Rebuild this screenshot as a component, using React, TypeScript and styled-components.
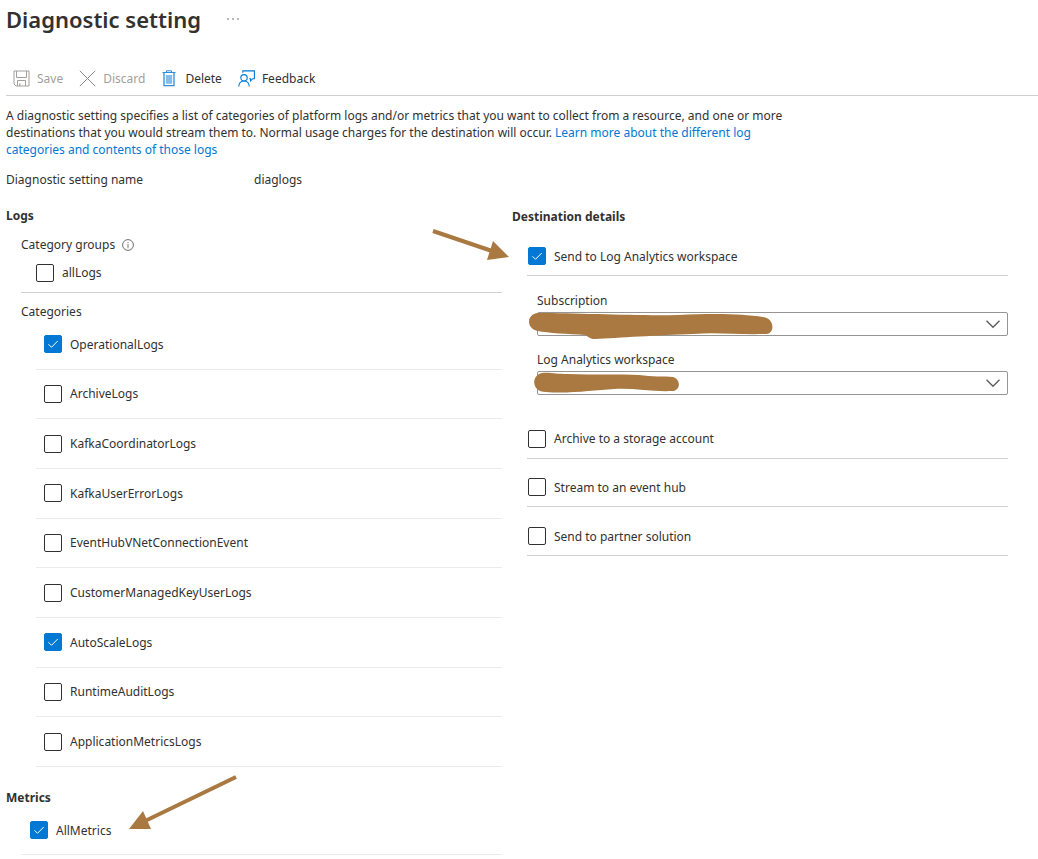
import React, { useId, useState } from "react";
import styled, { createGlobalStyle } from "styled-components";

const GlobalStyle = createGlobalStyle`
  *, *::before, *::after { box-sizing: border-box; }
  body {
    margin: 0;
    background: #fff;
    color: #323130;
    font: 12px/17px "Noto Sans", "Open Sans", sans-serif;
  }
  h1, h2, h3, p, ul { margin: 0; padding: 0; }
  button, select, input { font: inherit; color: inherit; }
`;

const Page = styled.main`
  padding: 3px 0 4px 6px;
`;

const Header = styled.header`
  display: flex;
  align-items: center;
  gap: 24px;
`;

const Title = styled.h1`
  font-size: 22px;
  line-height: 32px;
  font-weight: 600;
`;

const MoreButton = styled.button`
  display: flex;
  padding: 0;
  border: 0;
  background: none;
`;

const Toolbar = styled.div`
  display: flex;
  align-items: center;
  gap: 16px;
  height: 36px;
  margin-top: 25px;
  padding: 2px 7px 0;
  border-bottom: 1px solid #d2d0ce;
`;

const ToolButton = styled.button`
  display: flex;
  align-items: center;
  gap: 7px;
  padding: 0;
  border: 0;
  background: none;
  &:disabled { color: #a19f9d; }
`;

const Description = styled.p`
  max-width: 800px;
  margin-top: 11px;
`;

const Link = styled.a`
  color: #0078d4;
  text-decoration: none;
`;

const NameRow = styled.div`
  display: grid;
  grid-template-columns: 248px 1fr;
  margin-top: 13px;
`;

const Columns = styled.div<{ $top: number }>`
  display: grid;
  grid-template-columns: 1fr 1fr;
  gap: 10px;
  margin: ${(p) => p.$top}px 30px 0 0;
`;

const Column = styled.section<{ $inset?: number }>`
  min-width: 0;
  padding-top: ${(p) => p.$inset ?? 0}px;
`;

const SectionTitle = styled.h2`
  font-size: 12px;
  line-height: 17px;
  font-weight: 700;
`;

const Group = styled.div<{ $top: number }>`
  margin: ${(p) => p.$top}px 0 0 15px;
`;

const GroupTitle = styled.h3`
  display: flex;
  align-items: center;
  gap: 7px;
  font-size: 12px;
  line-height: 17px;
  font-weight: 400;
`;

const CheckRow = styled.div<{ $height: number; $indent: number; $line: string }>`
  display: flex;
  align-items: center;
  position: relative;
  height: ${(p) => p.$height}px;
  padding-left: ${(p) => p.$indent}px;
  border-bottom: 1px solid ${(p) => p.$line};
`;

const CategoryList = styled.ul`
  display: grid;
  grid-auto-rows: 1fr;
  min-height: 447px;
  margin-left: 15px;
  list-style: none;
`;

const CategoryItem = styled.li`
  display: flex;
  align-items: center;
  padding-left: 8px;
  border-bottom: 1px solid #edebe9;
`;

const DestinationList = styled.ul`
  display: grid;
  grid-auto-rows: 1fr;
  min-height: 146px;
  list-style: none;
`;

const DestinationItem = styled.li`
  display: flex;
  align-items: flex-end;
  padding: 0 0 10px 1px;
  border-bottom: 1px solid #d2d0ce;
`;

const CheckLabel = styled.label`
  display: flex;
  align-items: center;
  gap: 8px;
`;

const BoxWrap = styled.span`
  display: grid;
  width: 18px;
  height: 18px;
  > * { grid-area: 1 / 1; }
  > svg { pointer-events: none; }
`;

const Box = styled.input`
  appearance: none;
  width: 18px;
  height: 18px;
  margin: 0;
  border: 1px solid #323130;
  border-radius: 2px;
  background: #fff;
  &:checked { background: #0078d4; border-color: #0078d4; }
`;

const Fields = styled.div`
  display: grid;
  gap: 15px;
  margin: 16px 0 15px 10px;
`;

const Field = styled.div`
  position: relative;
`;

const FieldLabel = styled.label`
  display: block;
  margin-bottom: 3px;
`;

const SelectWrap = styled.div`
  display: grid;
  align-items: center;
  > * { grid-area: 1 / 1; }
  > svg { justify-self: end; margin-right: 7px; pointer-events: none; }
`;

const Select = styled.select`
  appearance: none;
  width: 100%;
  height: 24px;
  padding: 0 28px 0 8px;
  border: 1px solid #979593;
  border-radius: 2px;
  background: #fff;
`;

const Annotation = styled.svg<{ $left: number; $top: number }>`
  position: absolute;
  left: ${(p) => p.$left}px;
  top: ${(p) => p.$top}px;
  pointer-events: none;
`;

const BROWN = "#a97941";

function Check({ label, checked = false }: { label: string; checked?: boolean }) {
  const [on, setOn] = useState(checked);
  const id = useId();
  return (
    <CheckLabel htmlFor={id}>
      <BoxWrap>
        <Box id={id} type="checkbox" checked={on} onChange={(e) => setOn(e.target.checked)} />
        {on && (
          <svg width="18" height="18" viewBox="0 0 18 18" fill="none" stroke="#fff" aria-hidden="true">
            <path d="M4.500 9.300l3 3 6.200-6.300" />
          </svg>
        )}
      </BoxWrap>
      {label}
    </CheckLabel>
  );
}

function Dropdown({ label, children }: { label: string; children: React.ReactNode }) {
  const id = useId();
  return (
    <Field>
      <FieldLabel htmlFor={id}>{label}</FieldLabel>
      <SelectWrap>
        <Select id={id} />
        <svg width="16" height="10" viewBox="0 0 16 10" fill="none" stroke="#605e5c" strokeWidth="1.4" aria-hidden="true">
          <path d="M1.500 1.700L8 8.200l6.500-6.500" />
        </svg>
      </SelectWrap>
      {children}
    </Field>
  );
}

const SaveIcon = () => (
  <svg width="17" height="17" viewBox="0 0 17 17" fill="none" stroke="#a19f9d" aria-hidden="true">
    <path d="M1 1h15v15H3L1 14zM3.500 1v6.500h10V1M4.500 16v-5.500h8V16M6.800 16v-2.800" />
  </svg>
);

const DiscardIcon = () => (
  <svg width="17" height="17" viewBox="0 0 17 17" fill="none" stroke="#8a8886" aria-hidden="true">
    <path d="M.8.8l15.400 15.400M16.200.8L.8 16.200" />
  </svg>
);

const DeleteIcon = () => (
  <svg width="17" height="17" viewBox="-1 0 17 17" fill="none" stroke="#2b8fe0" aria-hidden="true">
    <path d="M.5 2.500h13M4.500 2.300V.8h5v1.500" />
    <path d="M2 2.500v13.200h10V2.500" strokeWidth="1.300" />
    <path d="M3.800 5h6.400v8.800H3.800z" fill="#83bdec" stroke="none" />
  </svg>
);

const FeedbackIcon = () => (
  <svg width="17" height="17" viewBox="0 0 17 17" fill="none" stroke="#0078d4" strokeWidth="1.100" aria-hidden="true">
    <path d="M4.800 2.700V.9h11.600v7.800h-1.600l-2.300 2.200V8.700h-1.300" />
    <circle cx="6" cy="7.800" r="3.200" />
    <path d="M.7 16.500c.3-3.400 2.400-5.500 5.300-5.500s5 2.100 5.300 5.500" />
  </svg>
);

const InfoIcon = () => (
  <svg width="12" height="12" viewBox="0 0 12 12" fill="none" stroke="#605e5c" strokeWidth="0.900" aria-hidden="true">
    <circle cx="6" cy="6" r="5.400" />
    <path d="M6 5.200v3.600M6 3.200v1" />
  </svg>
);

const categories = [
  { name: "OperationalLogs", on: true },
  { name: "ArchiveLogs" },
  { name: "KafkaCoordinatorLogs" },
  { name: "KafkaUserErrorLogs" },
  { name: "EventHubVNetConnectionEvent" },
  { name: "CustomerManagedKeyUserLogs" },
  { name: "AutoScaleLogs", on: true },
  { name: "RuntimeAuditLogs" },
  { name: "ApplicationMetricsLogs" },
];

const destinations = ["Archive to a storage account", "Stream to an event hub", "Send to partner solution"];

export default function App() {
  return (
    <>
      <GlobalStyle />
      <Page>
        <Header>
          <Title>Diagnostic setting</Title>
          <MoreButton aria-label="More actions">
            <svg width="16" height="4" viewBox="0 0 16 4" fill="#605e5c" aria-hidden="true">
              <circle cx="3" cy="2" r=".8" />
              <circle cx="8" cy="2" r=".8" />
              <circle cx="13" cy="2" r=".8" />
            </svg>
          </MoreButton>
        </Header>
        <Toolbar role="toolbar">
          <ToolButton disabled><SaveIcon />Save</ToolButton>
          <ToolButton disabled><DiscardIcon />Discard</ToolButton>
          <ToolButton><DeleteIcon />Delete</ToolButton>
          <ToolButton><FeedbackIcon />Feedback</ToolButton>
        </Toolbar>
        <Description>
          A diagnostic setting specifies a list of categories of platform logs and/or metrics that you want to collect
          from a resource, and one or more destinations that you would stream them to. Normal usage charges for the
          destination will occur.{" "}
          <Link href="#learn-more">Learn more about the different log categories and contents of those logs</Link>
        </Description>
        <NameRow>
          <span>Diagnostic setting name</span>
          <span>diaglogs</span>
        </NameRow>
        <Columns $top={19}>
          <Column>
            <SectionTitle>Logs</SectionTitle>
            <Group $top={12}>
              <GroupTitle>Category groups <InfoIcon /></GroupTitle>
              <CheckRow $height={40} $indent={15} $line="#d2d0ce">
                <Check label="allLogs" />
              </CheckRow>
            </Group>
            <Group $top={10}>
              <GroupTitle>Categories</GroupTitle>
              <CategoryList>
                {categories.map((c) => (
                  <CategoryItem key={c.name}>
                    <Check label={c.name} checked={c.on} />
                  </CategoryItem>
                ))}
              </CategoryList>
            </Group>
          </Column>
          <Column $inset={1}>
            <SectionTitle>Destination details</SectionTitle>
            <Group $top={12}>
              <CheckRow $height={39} $indent={1} $line="#d2d0ce">
                <Check label="Send to Log Analytics workspace" checked />
                <Annotation $left={-95} $top={-8} width="78" height="34" viewBox="0 0 78 34" aria-hidden="true">
                  <path d="M1 2L60 22" stroke={BROWN} strokeWidth="4" />
                  <path d="M61 12L77 28 55 31z" fill={BROWN} />
                </Annotation>
              </CheckRow>
              <Fields>
                <Dropdown label="Subscription">
                  <Annotation $left={-9} $top={20} width="246" height="30" viewBox="0 0 246 30" aria-hidden="true">
                    <path d="M10 1C50 1 110 4 150 3C190 1 215 2 235 5C247 6 247 22 238 22C210 23 190 20 165 22C130 23 90 26 67 27C62 27 61 25 57 23C40 22 20 21 10 19C-2 17-2 2 10 1z" fill={BROWN} />
                  </Annotation>
                </Dropdown>
                <Dropdown label="Log Analytics workspace">
                  <Annotation $left={-3} $top={20} width="146" height="24" viewBox="0 0 146 24" aria-hidden="true">
                    <path d="M8 2C16 1 22 3 34 3C60 4 85 3 105 4C118 6 130 5 139 6C147 8 147 20 138 20C120 21 100 17 80 18C60 19 35 23 12 21C-3 21-3 4 8 2z" fill={BROWN} />
                  </Annotation>
                </Dropdown>
              </Fields>
              <DestinationList>
                {destinations.map((d) => (
                  <DestinationItem key={d}>
                    <Check label={d} />
                  </DestinationItem>
                ))}
              </DestinationList>
            </Group>
          </Column>
        </Columns>
        <Columns $top={22}>
          <Column>
            <SectionTitle>Metrics</SectionTitle>
            <Group $top={0}>
              <CheckRow $height={49} $indent={9} $line="#edebe9">
                <Check label="AllMetrics" checked />
                <Annotation $left={108} $top={-31} width="108" height="58" viewBox="0 0 108 58" aria-hidden="true">
                  <path d="M107 2L16 46" stroke={BROWN} strokeWidth="4" />
                  <path d="M0 54L14 36 22 54z" fill={BROWN} />
                </Annotation>
              </CheckRow>
            </Group>
          </Column>
        </Columns>
      </Page>
    </>
  );
}
